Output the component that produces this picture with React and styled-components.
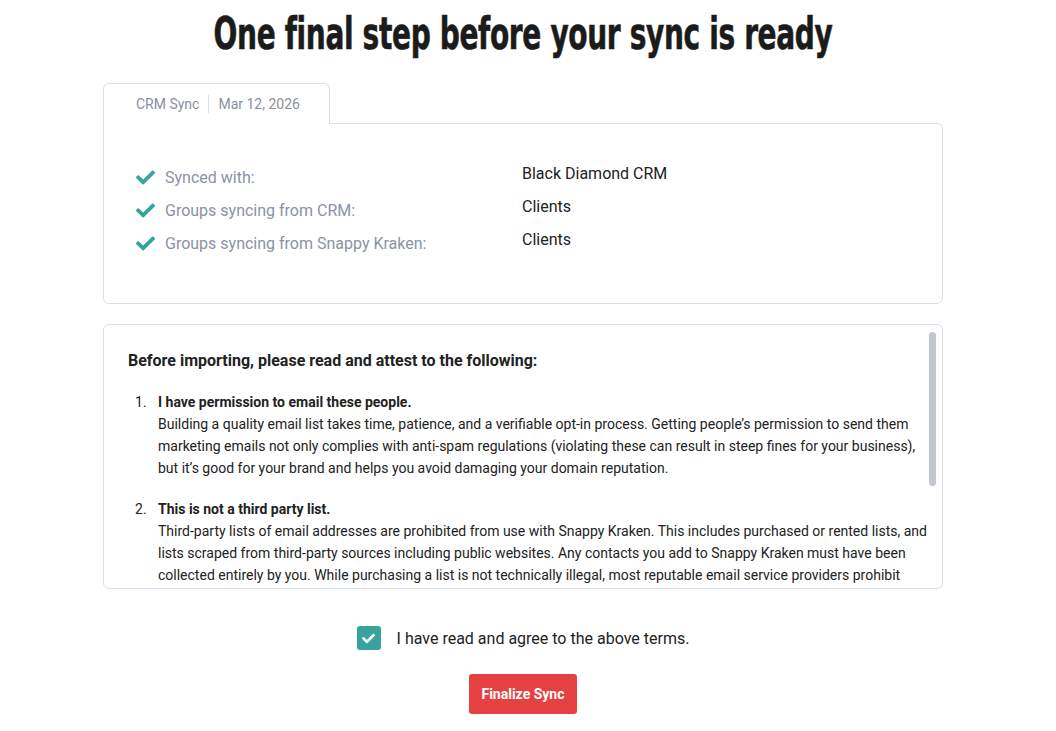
import React, { useState } from 'react';
import styled, { createGlobalStyle } from 'styled-components';
import { FaCheck } from 'react-icons/fa';

const GlobalStyle = createGlobalStyle`
  html, body {
    margin: 0;
    padding: 0;
    background: #fff;
  }
  body {
    font-family: Roboto, "Liberation Sans", Arial, sans-serif;
    color: #222;
    -webkit-font-smoothing: antialiased;
  }
`;

const syncRows = [
  { label: 'Synced with:', value: 'Black Diamond CRM' },
  { label: 'Groups syncing from CRM:', value: 'Clients' },
  { label: 'Groups syncing from Snappy Kraken:', value: 'Clients' },
];

const terms = [
  {
    title: 'I have permission to email these people.',
    body: 'Building a quality email list takes time, patience, and a verifiable opt-in process. Getting people\u2019s permission to send them marketing emails not only complies with anti-spam regulations (violating these can result in steep fines for your business), but it\u2019s good for your brand and helps you avoid damaging your domain reputation.',
  },
  {
    title: 'This is not a third party list.',
    body: 'Third-party lists of email addresses are prohibited from use with Snappy Kraken. This includes purchased or rented lists, and lists scraped from third-party sources including public websites. Any contacts you add to Snappy Kraken must have been collected entirely by you. While purchasing a list is not technically illegal, most reputable email service providers prohibit the\u00a0use of purchased lists because they hurt deliverability for everyone.',
  },
  {
    title: 'My list is current and engaged.',
    body: 'Contacts who have not heard from you in a long time are more likely to mark your emails as spam. Make sure the people on this list expect to hear from you and have recently interacted with your business.',
  },
];

const App = () => {
  const [agreed, setAgreed] = useState(true);

  return (
    <Page>
      <GlobalStyle />
      <Wrapper>
        <TitleRow>
          <Title>One final step before your sync is ready</Title>
        </TitleRow>

        <Tab>
          <TabText>CRM Sync</TabText>
          <TabDivider />
          <TabText>Mar 12, 2026</TabText>
        </Tab>
        <SummaryCard>
          {syncRows.map((row) => (
            <SummaryRow key={row.label}>
              <Label>
                <CheckIcon />
                {row.label}
              </Label>
              <Value>{row.value}</Value>
            </SummaryRow>
          ))}
        </SummaryCard>

        <TermsFrame>
          <TermsPanel>
            <TermsHeading>Before importing, please read and attest to the following:</TermsHeading>
            <TermsList>
              {terms.map((t, i) => (
                <TermItem key={t.title}>
                  <TermNumber>{i + 1}.</TermNumber>
                  <div>
                    <TermTitle>{t.title}</TermTitle>
                    <TermBody>{t.body}</TermBody>
                  </div>
                </TermItem>
              ))}
            </TermsList>
          </TermsPanel>
          <ScrollThumb />
        </TermsFrame>

        <AgreeRow onClick={() => setAgreed(!agreed)}>
          <Checkbox checked={agreed}>{agreed && <FaCheck size={13} />}</Checkbox>
          <AgreeText>I have read and agree to the above terms.</AgreeText>
        </AgreeRow>

        <ButtonRow>
          <FinalizeButton disabled={!agreed}>Finalize Sync</FinalizeButton>
        </ButtonRow>
      </Wrapper>
    </Page>
  );
};

export default App;


const Page = styled.div`
  padding: 0 10px 0 0;
`;

const Wrapper = styled.div`
  width: 840px;
  margin: 0 auto;
  padding-top: 8px;
`;

const TitleRow = styled.div`
  display: flex;
  justify-content: center;
  height: 52px;
  margin-bottom: 23px;
`;

const Title = styled.h1`
  margin: 0;
  white-space: nowrap;
  font-family: "DejaVu Sans Condensed", "DejaVu Sans", sans-serif;
  font-weight: 700;
  font-size: 44px;
  line-height: 52px;
  color: #1b1b1b;
  letter-spacing: -0.5px;
  -webkit-text-stroke: 0.6px #1b1b1b;
  transform: scaleX(0.708);
  transform-origin: center;
`;

const Tab = styled.div`
  position: relative;
  z-index: 1;
  display: flex;
  align-items: center;
  width: 227px;
  height: 41px;
  box-sizing: border-box;
  padding: 0 0 0 32px;
  margin-bottom: -1px;
  background: #fff;
  border: 1px solid #dcdfe6;
  border-bottom: none;
  border-radius: 6px 6px 0 0;
`;

const TabText = styled.span`
  font-size: 14px;
  color: #8a90a0;
`;

const TabDivider = styled.span`
  width: 1px;
  height: 18px;
  margin: 0 9px;
  background: #dcdfe6;
`;

const SummaryCard = styled.div`
  border: 1px solid #dcdfe6;
  border-radius: 0 6px 6px 6px;
  padding: 37px 32px 43px;
`;

const SummaryRow = styled.div`
  display: grid;
  grid-template-columns: 386px 1fr;
  height: 33px;
`;

const Label = styled.div`
  display: flex;
  align-items: center;
  gap: 10px;
  padding-top: 4px;
  height: 25px;
  font-size: 16px;
  color: #8b92a5;
`;

const CheckIcon = styled(FaCheck)`
  width: 19px;
  height: 19px;
  color: #38a39c;
`;

const Value = styled.div`
  font-size: 16px;
  line-height: 25px;
  color: #222;
`;

const TermsFrame = styled.div`
  position: relative;
  margin-top: 20px;
  height: 265px;
  box-sizing: border-box;
  border: 1px solid #dcdfe6;
  border-radius: 6px;
  overflow: hidden;
`;

const TermsPanel = styled.div`
  height: 100%;
  box-sizing: border-box;
  padding: 24px 14px 0 24px;
  overflow-y: auto;
  scrollbar-width: none;

  &::-webkit-scrollbar {
    display: none;
  }
`;

const ScrollThumb = styled.div`
  position: absolute;
  top: 7px;
  right: 6px;
  width: 7px;
  height: 154px;
  border-radius: 4px;
  background: #c1c6d1;
`;

const TermsHeading = styled.h3`
  margin: 0 0 18px;
  font-size: 16px;
  line-height: 24px;
  font-weight: 700;
  color: #222;
`;

const TermsList = styled.ol`
  list-style: none;
  margin: 0;
  padding: 0 0 24px 7px;
`;

const TermItem = styled.li`
  display: grid;
  grid-template-columns: 23px 1fr;
  font-size: 14px;
  line-height: 22px;
  color: #222;

  & + & {
    margin-top: 19px;
  }
`;

const TermNumber = styled.span``;

const TermTitle = styled.div`
  font-weight: 700;
`;

const TermBody = styled.div``;

const AgreeRow = styled.label`
  display: flex;
  justify-content: center;
  align-items: center;
  gap: 16px;
  margin-top: 37px;
  cursor: pointer;
`;

const Checkbox = styled.span`
  display: flex;
  align-items: center;
  justify-content: center;
  width: 24px;
  height: 24px;
  border-radius: 3px;
  background: ${(p) => (p.checked ? '#38a39c' : '#fff')};
  border: ${(p) => (p.checked ? 'none' : '1px solid #c1c6d1')};
  color: #fff;
`;

const AgreeText = styled.span`
  font-size: 16px;
  color: #222;
`;

const ButtonRow = styled.div`
  display: flex;
  justify-content: center;
  margin-top: 24px;
`;

const FinalizeButton = styled.button`
  height: 40px;
  padding: 0 12px;
  border: none;
  border-radius: 3px;
  background: #e64142;
  color: #fff;
  font-family: Roboto, "Liberation Sans", sans-serif;
  font-size: 14px;
  font-weight: 700;
  cursor: pointer;
`;
